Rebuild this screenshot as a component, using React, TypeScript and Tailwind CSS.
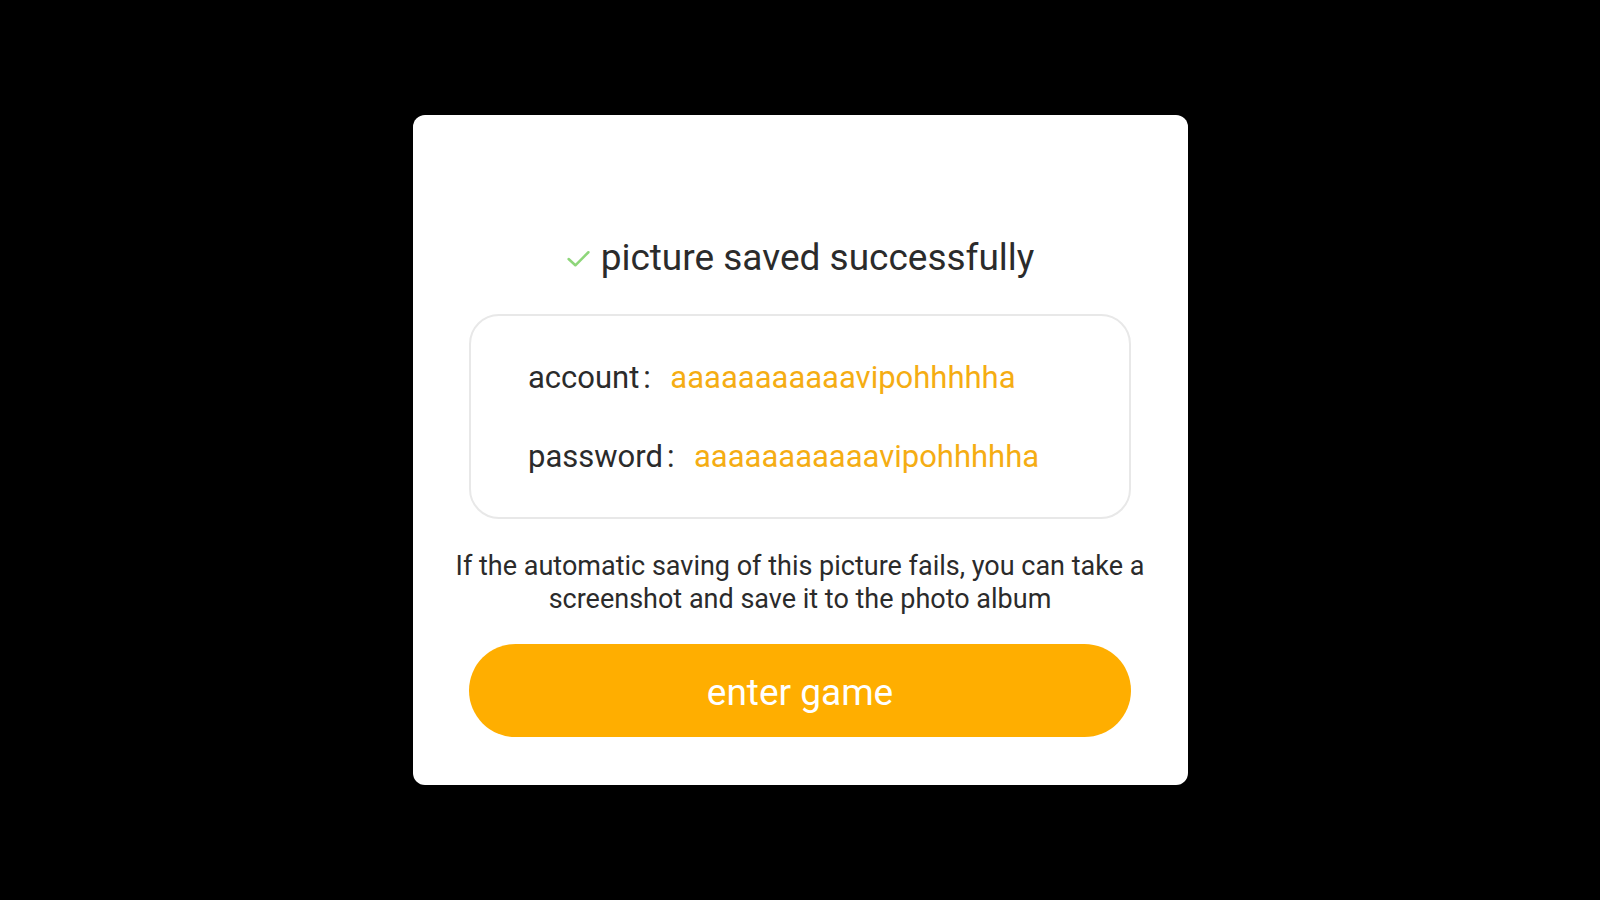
export default function App() {
  return (
    <div className="flex h-screen w-full items-center justify-center bg-black font-['Roboto',sans-serif]">
      <div className="flex w-[775px] flex-col items-center rounded-[12px] bg-white px-[30px] pb-[48px] pt-[121px]">
        <div className="flex h-[44px] items-center gap-[10px]">
          <svg width="25" height="25" viewBox="0 0 24 24" className="mt-[1px]">
            <polyline
              points="2.5,12.5 9,18.5 21.5,6"
              fill="none"
              stroke="#8ed67a"
              strokeWidth="2.4"
              strokeLinecap="round"
              strokeLinejoin="round"
            />
          </svg>
          <span className="text-[37px] leading-[44px] text-[#2b2b2b]">picture saved successfully</span>
        </div>

        <div className="mt-[34px] flex w-[662px] flex-col gap-[39px] rounded-[30px] border-2 border-[#e8e8e8] pb-[40px] pl-[57px] pt-[42px]">
          <div className="flex h-[40px] items-center text-[31px] leading-[40px]">
            <span className="text-[#2b2b2b]">account</span>
            <span className="ml-[4px] w-[27px] text-[#2b2b2b]">:</span>
            <span className="text-[#f5ad13]">aaaaaaaaaaavipohhhhha</span>
          </div>
          <div className="flex h-[40px] items-center text-[31px] leading-[40px]">
            <span className="text-[#2b2b2b]">password</span>
            <span className="ml-[4px] w-[27px] text-[#2b2b2b]">:</span>
            <span className="text-[#f5ad13]">aaaaaaaaaaavipohhhhha</span>
          </div>
        </div>

        <p className="mt-[31px] whitespace-nowrap text-center text-[27px] leading-[33px] text-[#2b2b2b]">
          If the automatic saving of this picture fails, you can take a
          <br />
          screenshot and save it to the photo album
        </p>

        <button className="mt-[28px] flex h-[93px] w-[662px] items-center justify-center rounded-full bg-[#ffae00] pt-[4px] text-[37px] text-white">
          enter game
        </button>
      </div>
    </div>
  );
}
